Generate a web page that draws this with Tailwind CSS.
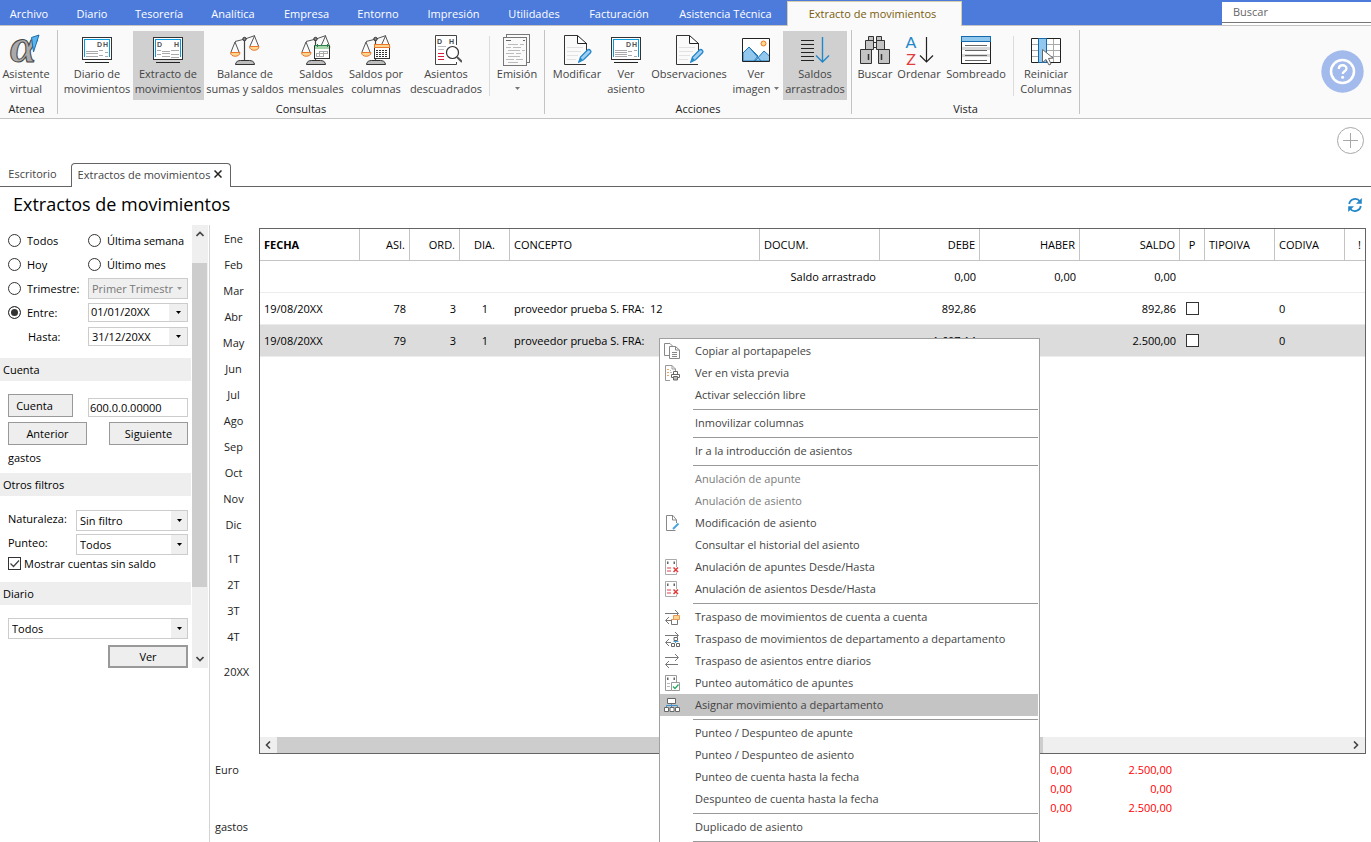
<!DOCTYPE html>
<html lang="es">
<head>
<meta charset="utf-8">
<title>Extractos de movimientos</title>
<script src="https://cdn.jsdelivr.net/npm/@tailwindcss/browser@4"></script>
</head>
<body class="h-screen overflow-hidden bg-white font-['Open_Sans',sans-serif] text-[11px] leading-[15px] text-black">

<svg class="hidden" aria-hidden="true">
  <symbol id="screen" viewBox="0 0 32 32">
    <g fill="none" shape-rendering="crispEdges">
      <rect x="1.5" y="3.5" width="29" height="22" fill="#fff" stroke="#333"/>
      <path d="M3.500 23V5.500h25V23" stroke="#0a9bdc"/>
      <path d="M4 28.500h24" stroke="#222"/>
    </g>
  </symbol>
  <symbol id="scale" viewBox="0 0 32 32">
    <g fill="none" stroke="#555">
      <path d="M6 7.500L16 5 26 1.500M6 8L2 18M6 8l4 10M25.500 2L21 12M25.500 2l4 10"/>
      <path d="M15.500 6v20" stroke="#444" stroke-width="1.200"/>
      <circle cx="15.500" cy="5" r="1.700" fill="#888" stroke="#333"/>
      <path d="M1.500 18.500h9.500c0 5-9.500 5-9.500 0zM20.500 12.500H30c0 5-9.500 5-9.500 0z" fill="#fcd68f" stroke="#e8762d"/>
      <path d="M6.500 30.500c0-3 3-4 5-4h9c2 0 5 1 5 4z" fill="#bdbdbd" stroke="#333"/>
    </g>
  </symbol>
  <symbol id="note" viewBox="0 0 32 32">
    <path d="M3.500 1.500h13M25 30.500H3.500v-29M25.500 9v9" fill="none" stroke="#333"/>
    <path d="M16.500 1.500v8h9z" fill="#fff" stroke="#222"/>
    <path d="M6 13.500h16M6 17.500h14M6 21.500h11M6 25.500h9" stroke="#e2e2e2"/>
    <path d="M18 28l1.500-5 7-7c2-1.500 4.500 1 3 2.800l-7 7z" fill="#9fd0f2" stroke="#2487c9" stroke-width="1.300"/>
    <path d="M17 28.500l2.500-5 2 2z" fill="#2487c9"/>
  </symbol>
  <symbol id="arrow" viewBox="0 0 5 3"><path d="M0 0h5L2.500 3z" fill="currentColor"/></symbol>
  <symbol id="sheetx" viewBox="0 0 16 16">
    <path d="M12.500 8V.5h-11v15h11v-2" fill="none" stroke="#aaa"/>
    <path d="M3 2.500h1.500V5H3zM9.500 2.500H11V5H9.500z" fill="#666"/>
    <path d="M3 9h4M3 12h4" stroke="#f0a0a0" stroke-width="1.800"/>
    <path d="M9.500 8.500l4.500 4.500M14 8.500L9.500 13" stroke="#e03a3a" stroke-width="1.500"/>
  </symbol>
  <symbol id="swap" viewBox="0 0 16 16"><path d="M1 4.500h13M11 1l3.500 3.500L11 8M14 11.500H2M5 8l-3.500 3.500L5 15" fill="none" stroke="#777"/></symbol>
</svg>

<div class="flex h-full flex-col">

  <!-- Menu bar -->
  <header class="flex h-[26px] shrink-0 items-stretch border-b border-[#c4c4c4] bg-[#4d7bdb] text-white">
    <nav class="flex [&>button]:pt-0.5">
      <button class="w-[62px] pr-1">Archivo</button>
      <button class="w-[60px]">Diario</button>
      <button class="w-[74px]">Tesorería</button>
      <button class="w-[74px]">Analítica</button>
      <button class="w-[73px]">Empresa</button>
      <button class="w-[70px]">Entorno</button>
      <button class="w-[81px]">Impresión</button>
      <button class="w-[80px]">Utilidades</button>
      <button class="w-[90px]">Facturación</button>
      <button class="w-[123px]">Asistencia Técnica</button>
      <button class="-mb-px mt-px w-[175px] border border-b-0 border-[#d6cfae] bg-[#fafafa] pb-1 pr-1 text-[#7a5c0a]">Extracto de movimientos</button>
    </nav>
    <div class="ml-auto mt-0.5 w-[149px] bg-white">
      <input type="text" aria-label="Buscar" placeholder="Buscar" class="block h-[21px] w-full border-b border-[#777] px-[11px] pb-0.5 outline-none placeholder:text-[#666]">
    </div>
  </header>

  <!-- Ribbon -->
  <section class="flex h-[93px] shrink-0 border-b border-[#c4c4c4] bg-[#fafafa] py-1 text-[#444]">
    <div class="flex w-[58px] flex-col border-r border-[#c4c4c4]">
      <div class="flex pt-px">
        <button class="flex h-[69px] w-[53px] flex-col items-center pr-px pt-[3px]">
          <svg class="size-8 shrink-0 overflow-visible" viewBox="0 0 32 32"><text x="0" y="28" font-family="Liberation Serif" font-style="italic" font-weight="bold" font-size="48" fill="#aaa" stroke="#444">α</text><path d="M21.500 3.500l7.500-2.500-5.500 17z" fill="#5ab4ee" stroke="#1b6fae"/></svg>
          <span>Asistente<br>virtual</span>
        </button>
      </div>
      <div class="mt-auto w-[53px] text-center leading-[11px] text-[#222]">Atenea</div>
    </div>

    <div class="flex w-[487px] flex-col border-r border-[#c4c4c4]">
      <div class="flex pl-1 pt-px">
        <button class="flex h-[69px] w-[71px] flex-col items-center pr-px pt-[3px]">
          <svg class="size-8 shrink-0" viewBox="0 0 32 32"><use href="#screen"/><g font-family="Liberation Sans" font-weight="bold" font-size="7" fill="#555"><text x="16" y="13">D</text><text x="22" y="13">H</text></g><path d="M5 17.500h12M18 16.500h4M24 18.500h3M5 19.500h12M18 21.500h4M5 22.500h12M24 22.500h3" stroke="#aaa"/></svg>
          <span>Diario de<br>movimientos</span>
        </button>
        <button class="flex h-[69px] w-[71px] flex-col items-center bg-[#d0d0d0] pr-px pt-[3px]">
          <svg class="size-8 shrink-0" viewBox="0 0 32 32"><use href="#screen"/><g font-family="Liberation Sans" font-weight="bold" font-size="7" fill="#555"><text x="5" y="13">D</text><text x="22" y="13">H</text></g><path d="M5 16.500h4M10 17.500h8M19 16.500h8M5 20.500h4M10 19.500h8M19 20.500h8M10 22.500h8M19 23.500h8" stroke="#aaa"/></svg>
          <span>Extracto de<br>movimientos</span>
        </button>
        <button class="flex h-[69px] w-[82px] flex-col items-center pt-[3px]">
          <svg class="size-8 shrink-0" viewBox="0 0 32 32"><use href="#scale"/></svg>
          <span class="whitespace-nowrap">Balance de<br>sumas y saldos</span>
        </button>
        <button class="flex h-[69px] w-[60px] flex-col items-center pt-[3px]">
          <svg class="size-8 shrink-0" viewBox="0 0 32 32"><use href="#scale"/><g shape-rendering="crispEdges"><path d="M14.500 11.500h15v13h-15z" fill="#fff" stroke="#333"/><path d="M15 12h14v3H15z" fill="#a5d6ab"/><path d="M14 11.500h16" stroke="#2e7d4b"/><path d="M17.500 10v3M27.500 10v3" stroke="#2e7d4b"/><path d="M20 17.500h8M16 19.500h12M16 22.500h8M19.500 17v6M23.500 17v6M16.500 19v4M27.500 17v3" stroke="#aaa"/></g></svg>
          <span>Saldos<br>mensuales</span>
        </button>
        <button class="flex h-[69px] w-[61px] flex-col items-center pr-px pt-[3px]">
          <svg class="size-8 shrink-0" viewBox="0 0 32 32"><use href="#scale"/><g shape-rendering="crispEdges"><path d="M14.500 10.500h15v14h-15z" fill="#fff" stroke="#333"/><path d="M14.500 10.500h15v3h-15z" fill="#fcd68f" stroke="#e8762d"/><path d="M16 16.500h2M19 16.500h9M16 18.500h2M19 18.500h9M16 20.500h2M19 20.500h9M16 22.500h2M19 22.500h9" stroke="#333" stroke-dasharray="2 1"/></g></svg>
          <span>Saldos por<br>columnas</span>
        </button>
        <button class="flex h-[69px] w-[78px] flex-col items-center pt-[3px]">
          <svg class="size-8 shrink-0" viewBox="0 0 32 32"><path d="M26.500 11V1.500h-21v29h21V28" fill="#fff" stroke="#444"/><g font-family="Liberation Sans" font-weight="bold" font-size="7" fill="#444"><text x="7" y="10">D</text><text x="19" y="10">H</text></g><path d="M8 12.500h8M8 15.500h6" stroke="#bbb"/><path d="M8 19.500h6M8 22.500h6M8 25.500h6" stroke="#d81e3c"/><circle cx="22.500" cy="18.500" r="6" fill="#fff" stroke="#333" stroke-width="1.200"/><path d="M27 23l5 5" stroke="#555" stroke-width="2"/></svg>
          <span>Asientos<br>descuadrados</span>
        </button>
        <div class="ml-1 mt-[5px] h-[60px] w-px bg-[#dcdcdc]"></div>
        <button class="flex h-[69px] w-[54px] flex-col items-center pt-[3px]">
          <svg class="size-8 shrink-0" viewBox="0 0 32 32" fill="#fafafa" stroke="#777" shape-rendering="crispEdges"><path d="M5.500.5h23v28h-23z"/><path d="M2.500 3.500h23v28h-23z"/><path d="M5 6.500h5M22 6.500h2" stroke="#666"/><path d="M7 10.500h10M19 10.500h4M5 13.500h5M12 13.500h8M7 16.500h12M21 16.500h3M5 19.500h8M15 19.500h5M7 22.500h12M5 25.500h8M15 25.500h7M7 28.500h10" stroke="#bbb"/></svg>
          <span>Emisión</span>
          <svg class="mt-1.5 h-[3px] w-[5px] text-[#777]"><use href="#arrow"/></svg>
        </button>
      </div>
      <div class="mt-auto text-center leading-[11px] text-[#222]">Consultas</div>
    </div>

    <div class="flex w-[307px] flex-col border-r border-[#c4c4c4]">
      <div class="flex pl-[3px] pt-px">
        <button class="flex h-[69px] w-[57px] flex-col items-center pl-px pt-[3px]">
          <svg class="size-8 shrink-0" viewBox="0 0 32 32"><use href="#note"/></svg>
          <span>Modificar</span>
        </button>
        <button class="flex h-[69px] w-[42px] flex-col items-center pt-[3px]">
          <svg class="size-8 shrink-0" viewBox="0 0 32 32"><use href="#screen"/><g font-family="Liberation Sans" font-weight="bold" font-size="7" fill="#555"><text x="16" y="13">D</text><text x="22" y="13">H</text></g><path d="M5 16.500h12M18 17.500h4M24 16.500h3M5 18.500h12M5 20.500h12M18 21.500h4M5 22.500h12M24 22.500h3" stroke="#aaa"/></svg>
          <span>Ver<br>asiento</span>
        </button>
        <button class="flex h-[69px] w-[83px] flex-col items-center pl-px pt-[3px]">
          <svg class="size-8 shrink-0" viewBox="0 0 32 32"><use href="#note"/></svg>
          <span>Observaciones</span>
        </button>
        <button class="flex h-[69px] w-[53px] flex-col items-center pr-px pt-[3px]">
          <svg class="size-8 shrink-0" viewBox="0 0 32 32"><path d="M2.500 4.500h27v23h-27z" fill="#fff"/><path d="M3 19l6-6 6 6 3 3-4 5H3zM15 27l9-10 5.500 5v5z" fill="#92c7ee" stroke="#1f77b8"/><path d="M3 19l6-6 12 14" fill="none" stroke="#1f77b8"/><circle cx="23.500" cy="9.500" r="2.500" fill="#fcd68f" stroke="#e8762d"/><path d="M2.500 4.500h27v23h-27z" fill="none" stroke="#222"/></svg>
          <span>Ver<br><span class="flex items-center gap-1">imagen <svg class="h-[3px] w-[5px] text-[#777]"><use href="#arrow"/></svg></span></span>
        </button>
        <button class="flex h-[69px] w-16 flex-col items-center bg-[#d0d0d0] pt-[3px]">
          <svg class="size-8 shrink-0" viewBox="0 0 32 32" fill="none"><path d="M2 6.500h13M2 10.500h13M2 14.500h13M2 18.500h13M2 22.500h13M2 26.500h13" stroke="#222"/><path d="M23.500 3v24.500M17 21.500l6.500 6.500 6.500-6.500" stroke="#2487c9" stroke-width="1.400"/></svg>
          <span>Saldos<br>arrastrados</span>
        </button>
      </div>
      <div class="mt-auto text-center leading-[11px] text-[#222]">Acciones</div>
    </div>

    <div class="flex w-[228px] flex-col border-r border-[#c4c4c4]">
      <div class="flex pl-[3px] pt-px">
        <button class="flex h-[69px] w-[41px] flex-col items-center pr-px pt-[3px]">
          <svg class="size-8 shrink-0" viewBox="0 0 32 32" fill="#c4c4c4" stroke="#333"><path d="M14 8.500h4v5h-4z" fill="#eee"/><path d="M9.500 2.500h5v4h-5zM17.500 2.500h5v4h-5zM6.500 6.500h8v9h-8zM17.500 6.500h8v9h-8zM1.500 15.500h11v14h-11zM19.500 15.500h11v14h-11z"/><path d="M9.500 20v6M22.500 20v6" stroke-width="1.500"/></svg>
          <span>Buscar</span>
        </button>
        <button class="flex h-[69px] w-[47px] flex-col items-center pr-px pt-[3px]">
          <svg class="size-8 shrink-0 overflow-visible" viewBox="0 0 32 32" fill="none"><text x="8" y="14" text-anchor="middle" font-family="Lato" font-size="16" fill="#2487c9">A</text><text x="8" y="30.500" text-anchor="middle" font-family="Lato" font-size="16" fill="#e23b3b">Z</text><path d="M23.500 3v24.500M17 21.500l6.500 6.500 6.500-6.500" stroke="#222" stroke-width="1.200"/></svg>
          <span>Ordenar</span>
        </button>
        <button class="flex h-[69px] w-[66px] flex-col items-center pt-[3px]">
          <svg class="size-8 shrink-0" viewBox="0 0 32 32" shape-rendering="crispEdges"><path d="M1.500 2.500h29v27h-29z" fill="#fff" stroke="#222"/><path d="M2 13h28v3H2zM2 20h28v3H2z" fill="#d8d8d8"/><path d="M1.500 2.500h29v5h-29z" fill="#92c7ee" stroke="#1569ad"/><path d="M5 11.500h22M5 16.500h22M5 21.500h22M5 26.500h22" stroke="#666"/></svg>
          <span>Sombreado</span>
        </button>
        <div class="ml-1 mt-[5px] h-[60px] w-px bg-[#dcdcdc]"></div>
        <button class="flex h-[69px] w-[65px] flex-col items-center pr-px pt-[3px]">
          <svg class="size-8 shrink-0" viewBox="0 0 32 32"><path d="M1.500 4.500h29v24h-29z" fill="#fff"/><path d="M2 10.500h28M2 16.500h28M2 22.500h28M23.500 5v23" stroke="#aaa"/><path d="M1.500 4.500h29v24h-29z" fill="none" stroke="#222"/><path d="M8.500 4.500h8v24h-8z" fill="#92c7ee" stroke="#1569ad"/><path d="M12.500 15.500v13l3.500-3 3 5.500 2-1-2.500-5.500 4.500-.5z" fill="#fff" stroke="#666"/></svg>
          <span>Reiniciar<br>Columnas</span>
        </button>
      </div>
      <div class="mt-auto text-center leading-[11px] text-[#222]">Vista</div>
    </div>

    <button aria-label="Ayuda" class="ml-auto mr-[7px] mt-5 size-[43px]">
      <svg class="size-full" viewBox="0 0 43 43" fill="none"><circle cx="21.500" cy="21.500" r="21.200" fill="#a3baec"/><circle cx="21.500" cy="21.500" r="11.500" stroke="#fff" stroke-width="2.500"/><path d="M17.800 19c0-5 7.700-4.800 7.700-.5 0 2.800-3.800 2.800-3.800 5.500" stroke="#fff" stroke-width="2.300"/><circle cx="21.600" cy="27.300" r="1.500" fill="#fff"/></svg>
    </button>
  </section>

  <!-- Document tabs -->
  <section class="flex h-[68px] shrink-0 flex-col justify-between">
    <div class="flex justify-end pr-[7px] pt-[7px]">
      <button aria-label="Añadir"><svg class="size-7" viewBox="0 0 28 28" fill="none" stroke="#a8a8a8"><circle cx="14.500" cy="14.500" r="13"/><path d="M14.500 7v15M7 14.500h15"/></svg></button>
    </div>
    <div class="flex h-6 text-[#444]">
      <button class="w-[71px] border-b border-[#646464] pb-0.5 pr-1.5">Escritorio</button>
      <div class="flex w-40 items-center justify-center gap-1 rounded-t border border-b-0 border-[#646464] pb-[3px] pr-0.5 whitespace-nowrap">
        <span>Extractos de movimientos</span>
        <button aria-label="Cerrar"><svg class="size-2" viewBox="0 0 8 8"><path d="M.5.5l7 7M7.500.5l-7 7" stroke="#222" stroke-width="1.500"/></svg></button>
      </div>
      <div class="flex-1 border-b border-[#646464]"></div>
    </div>
  </section>

  <div class="flex h-[38px] shrink-0 items-center justify-between pb-0.5 pl-[13px] pr-2">
    <h1 class="pb-0.5 text-[18px] leading-6">Extractos de movimientos</h1>
    <button aria-label="Actualizar"><svg class="size-4" viewBox="0 0 16 16" fill="none" stroke="#2487c9" stroke-width="1.800"><path d="M2.200 7A6 6 0 0 1 13 4.500M13.800 9A6 6 0 0 1 3 11.500"/><path d="M14.800 1v5.800H9zM1.200 15V9.200H7z" fill="#2487c9" stroke="none"/></svg></button>
  </div>

  <main class="relative flex min-h-0 flex-1">

    <!-- Filters -->
    <aside class="flex w-[210px] shrink-0 border-r border-[#d4d4d4]">
      <form class="w-[191px]">
        <div class="grid grid-cols-[80px_100px] pl-2 pt-[3px]">
          <label class="flex h-6 items-center gap-1.5"><input type="radio" name="periodo" class="size-[13px] appearance-none rounded-full border border-[#333] bg-white">Todos</label>
          <label class="flex h-6 items-center gap-1.5 whitespace-nowrap"><input type="radio" name="periodo" class="size-[13px] shrink-0 appearance-none rounded-full border border-[#333] bg-white">Última semana</label>
          <label class="flex h-6 items-center gap-1.5"><input type="radio" name="periodo" class="size-[13px] appearance-none rounded-full border border-[#333] bg-white">Hoy</label>
          <label class="flex h-6 items-center gap-1.5"><input type="radio" name="periodo" class="size-[13px] appearance-none rounded-full border border-[#333] bg-white">Último mes</label>
          <label class="flex h-6 items-center gap-1.5"><input type="radio" name="periodo" class="size-[13px] shrink-0 appearance-none rounded-full border border-[#333] bg-white">Trimestre:</label>
          <div class="relative flex h-6 items-center">
            <select disabled aria-label="Trimestre" class="h-[21px] w-full appearance-none border border-[#ccc] bg-[#efefef] px-[3px] text-[#777] opacity-100"><option>Primer Trimestr</option></select>
            <svg class="pointer-events-none absolute right-1.5 h-[3px] w-[5px] text-[#999]"><use href="#arrow"/></svg>
          </div>
          <label class="flex h-6 items-center gap-1.5"><input type="radio" name="periodo" checked class="size-[13px] appearance-none rounded-full border border-[#333] bg-white checked:bg-[#333] checked:shadow-[inset_0_0_0_2px_white]">Entre:</label>
          <div class="flex h-6 items-center"><div class="flex h-[19px] w-full border border-[#ccc]">
            <input aria-label="Entre" value="01/01/20XX" class="h-4 min-w-0 flex-1 px-0.5 outline-none"><button type="button" aria-label="Abrir calendario" class="flex w-[18px] items-center justify-center bg-[#efefef]"><svg class="h-[3px] w-[5px]"><use href="#arrow"/></svg></button>
          </div></div>
          <label for="hasta" class="flex h-6 items-center pl-5">Hasta:</label>
          <div class="flex h-6 items-center"><div class="flex h-[19px] w-full border border-[#ccc]">
            <input id="hasta" value="31/12/20XX" class="h-[17px] min-w-0 flex-1 px-[3px] outline-none"><button type="button" aria-label="Abrir calendario" class="flex w-[18px] items-center justify-center bg-[#efefef]"><svg class="h-[3px] w-[5px]"><use href="#arrow"/></svg></button>
          </div></div>
        </div>

        <h2 class="mt-2.5 flex h-[23px] items-center bg-[#eee] pl-[3px]">Cuenta</h2>
        <div class="flex flex-col pl-2 pr-[3px] pt-[13px]">
          <div class="flex items-end justify-between">
            <button type="button" class="h-[23px] w-[65px] border border-[#999] bg-[#eee] pr-3">Cuenta</button>
            <input aria-label="Cuenta" value="600.0.0.00000" class="h-[19px] w-[100px] border border-[#ccc] px-px pb-px outline-none">
          </div>
          <div class="mt-[5px] flex justify-between">
            <button type="button" class="h-[23px] w-[79px] border border-[#999] bg-[#eee]">Anterior</button>
            <button type="button" class="h-[23px] w-[79px] border border-[#999] bg-[#eee]">Siguiente</button>
          </div>
          <p class="mt-[5px]">gastos</p>
        </div>

        <h2 class="mt-2 flex h-[23px] items-center bg-[#eee] pl-[3px]">Otros filtros</h2>
        <div class="grid grid-cols-[68px_112px] gap-y-[3px] pl-2 pt-3.5">
          <label for="naturaleza" class="pt-px">Naturaleza:</label>
          <div class="relative flex items-center border border-[#ccc]">
            <select id="naturaleza" class="h-[19px] w-full appearance-none px-[3px] outline-none"><option>Sin filtro</option></select>
            <span class="pointer-events-none absolute right-0 flex h-full w-4 items-center justify-center bg-[#efefef]"><svg class="h-[3px] w-[5px]"><use href="#arrow"/></svg></span>
          </div>
          <label for="punteo" class="pt-px">Punteo:</label>
          <div class="relative flex items-center border border-[#ccc]">
            <select id="punteo" class="h-[19px] w-full appearance-none px-[3px] outline-none"><option>Todos</option></select>
            <span class="pointer-events-none absolute right-0 flex h-full w-4 items-center justify-center bg-[#efefef]"><svg class="h-[3px] w-[5px]"><use href="#arrow"/></svg></span>
          </div>
        </div>
        <label class="relative mt-px flex items-center gap-[3px] pl-2"><input type="checkbox" checked class="size-[13px] appearance-none border border-[#333] bg-white"><svg class="pointer-events-none absolute left-2 size-[13px]" viewBox="0 0 13 13"><path d="M2.500 6.500l3 3 5.500-6" fill="none" stroke="#444" stroke-width="1.300"/></svg>Mostrar cuentas sin saldo</label>

        <h2 class="mt-[11px] flex h-[23px] items-center bg-[#eee] pl-[3px]">Diario</h2>
        <div class="flex flex-col items-end gap-1.5 pl-2 pr-[3px] pt-[13px]">
          <div class="relative flex w-full items-center border border-[#ccc]">
            <select aria-label="Diario" class="h-[19px] w-full appearance-none px-[3px] outline-none"><option>Todos</option></select>
            <span class="pointer-events-none absolute right-0 flex h-full w-4 items-center justify-center bg-[#efefef]"><svg class="h-[3px] w-[5px]"><use href="#arrow"/></svg></span>
          </div>
          <button type="button" class="h-[23px] w-20 border-2 border-[#999] bg-[#eee]">Ver</button>
        </div>
      </form>
      <div class="ml-px flex h-[443px] w-4 flex-col items-center bg-[#efefef]">
        <svg class="mt-1.5 h-[6px] w-2" viewBox="0 0 8 6" fill="none" stroke="#444" stroke-width="1.600"><path d="M.5 5L4 1.500 7.500 5"/></svg>
        <div class="mt-[26px] h-[324px] w-[15px] self-start bg-[#cdcdcd]"></div>
        <svg class="mb-1.5 mt-auto h-[6px] w-2" viewBox="0 0 8 6" fill="none" stroke="#444" stroke-width="1.600"><path d="M.5 1L4 4.500 7.500 1"/></svg>
      </div>
    </aside>

    <!-- Period shortcuts -->
    <nav class="flex w-[49px] shrink-0 flex-col text-[#222] [&>button]:pr-0.5">
      <button class="h-[26px]">Ene</button>
      <button class="h-[26px]">Feb</button>
      <button class="h-[26px]">Mar</button>
      <button class="h-[26px]">Abr</button>
      <button class="h-[26px]">May</button>
      <button class="h-[26px]">Jun</button>
      <button class="h-[26px]">Jul</button>
      <button class="h-[26px]">Ago</button>
      <button class="h-[26px]">Sep</button>
      <button class="h-[26px]">Oct</button>
      <button class="h-[26px]">Nov</button>
      <button class="h-[26px]">Dic</button>
      <button class="mt-2 h-[26px]">1T</button>
      <button class="h-[26px]">2T</button>
      <button class="h-[26px]">3T</button>
      <button class="h-[26px]">4T</button>
      <button class="mt-[9px] h-[26px] pl-1.5">20XX</button>
      <span class="mt-[78px] pl-[5px]">Euro</span>
      <span class="mt-[42px] pl-[5px]">gastos</span>
    </nav>

    <!-- Entries grid -->
    <div class="mr-[5px] flex min-w-0 flex-1 flex-col pt-[3px]">
      <div class="flex h-[526px] flex-col border border-[#646464]">
        <table class="w-full table-fixed border-separate border-spacing-0">
          <colgroup><col class="w-[100px]"><col class="w-[50px]"><col class="w-[50px]"><col class="w-[50px]"><col class="w-[250px]"><col class="w-[120px]"><col class="w-[100px]"><col class="w-[100px]"><col class="w-[100px]"><col class="w-[25px]"><col class="w-[70px]"><col class="w-[70px]"><col></colgroup>
          <thead>
            <tr class="h-8 text-left [&>th]:border-b [&>th]:border-[#c4c4c4] [&>th]:px-1 [&>th]:font-normal">
              <th class="border-r"><b>FECHA</b></th>
              <th class="border-r text-right">ASI.</th>
              <th class="border-r text-right">ORD.</th>
              <th class="border-r text-center">DIA.</th>
              <th class="border-r">CONCEPTO</th>
              <th class="border-r">DOCUM.</th>
              <th class="border-r text-right">DEBE</th>
              <th class="border-r text-right">HABER</th>
              <th class="border-r text-right">SALDO</th>
              <th class="border-r text-center">P</th>
              <th class="border-r">TIPOIVA</th>
              <th class="border-r">CODIVA</th>
              <th class="text-right">!</th>
            </tr>
          </thead>
          <tbody class="[&_td]:border-b [&_td]:border-[#ececec] [&_td]:px-1">
            <tr class="h-8 text-right">
              <td></td><td></td><td></td><td></td><td></td><td>Saldo arrastrado</td><td>0,00</td><td>0,00</td><td>0,00</td><td></td><td></td><td></td><td></td>
            </tr>
            <tr class="h-8 text-right">
              <td class="text-left">19/08/20XX</td><td>78</td><td>3</td><td class="text-center">1</td><td class="whitespace-pre text-left">proveedor prueba S. FRA:  12</td><td></td><td>892,86</td><td></td><td>892,86</td>
              <td><input type="checkbox" aria-label="Punteado 78" class="mx-auto block size-[13px] appearance-none border border-[#333] bg-white"></td><td></td><td class="text-left">0</td><td></td>
            </tr>
            <tr class="h-8 bg-[#dcdcdc] text-right">
              <td class="text-left">19/08/20XX</td><td>79</td><td>3</td><td class="text-center">1</td><td class="text-left">proveedor prueba S. FRA:</td><td></td><td>1.607,14</td><td></td><td>2.500,00</td>
              <td><input type="checkbox" aria-label="Punteado 79" class="mx-auto block size-[13px] appearance-none border border-[#333] bg-white"></td><td></td><td class="text-left">0</td><td></td>
            </tr>
          </tbody>
        </table>
        <div class="mt-auto flex h-4 items-center bg-[#efefef] pr-1.5">
          <svg class="ml-[5px] h-2 w-[6px]" viewBox="0 0 6 8" fill="none" stroke="#444" stroke-width="1.600"><path d="M5 .5L1.500 4 5 7.500"/></svg>
          <div class="ml-1.5 h-full w-[766px] bg-[#cdcdcd]"></div>
          <svg class="ml-auto h-2 w-[6px]" viewBox="0 0 6 8" fill="none" stroke="#444" stroke-width="1.600"><path d="M1 .5L4.500 4 1 7.500"/></svg>
        </div>
      </div>
      <table class="mt-1.5 w-[913px] table-fixed text-right text-[#f00]">
        <colgroup><col><col class="w-[100px]"></colgroup>
        <tbody>
          <tr class="h-[19px]"><td>0,00</td><td>2.500,00</td></tr>
          <tr class="h-[19px]"><td>0,00</td><td>0,00</td></tr>
          <tr class="h-[19px]"><td>0,00</td><td>2.500,00</td></tr>
        </tbody>
      </table>
    </div>

    <!-- Context menu -->
    <div role="menu" class="absolute left-[659px] top-[113px] flex w-[381px] flex-col border border-[#a0a0a0] bg-white py-px pr-px text-[#444] [&>button]:flex [&>button]:h-[22px] [&>button]:items-center [&>button]:pb-0.5 [&>button]:pl-1 [&>hr]:my-0 [&>hr]:ml-[33px] [&>hr]:h-1.5 [&>hr]:border-0 [&_svg]:size-4 [&_i]:mr-[15px] [&_i]:mt-0.5 [&_i]:block [&_i]:size-4">
      <button role="menuitem"><i><svg viewBox="0 0 16 16" fill="#fff" stroke="#888"><path d="M5 12.500H.5v-12H6l3 3"/><path d="M5.500 3.500h6l4 3.500v8.500h-10z"/><path d="M11.500 3.500V7h4M8 9.500h5M8 11.500h5M8 13.500h5" fill="none"/></svg></i>Copiar al portapapeles</button>
      <button role="menuitem"><i><svg viewBox="0 0 16 16" fill="none" stroke="#999"><path d="M6 15.500H1.500V.5H8L11.500 4v3M8 .5V4h3.500"/><path d="M3 4.500h2M3 7.500h2M3 10.500h2" stroke="#e9a85c"/><path d="M6 7.500h2M6 5.500h1" stroke="#bbb"/><path d="M9.500 9V6.500h4V9M7.500 9.500h8v3h-8z" stroke="#666" fill="#fff"/><path d="M9.500 11.500h4v3.500h-4z" stroke="#666" fill="#bbb"/></svg></i>Ver en vista previa</button>
      <button role="menuitem"><i></i>Activar selección libre</button>
      <hr class="bg-[linear-gradient(#999,#999)] bg-[length:100%_1px] bg-[position:0_3px] bg-no-repeat">
      <button role="menuitem"><i></i>Inmovilizar columnas</button>
      <hr class="bg-[linear-gradient(#999,#999)] bg-[length:100%_1px] bg-[position:0_3px] bg-no-repeat">
      <button role="menuitem"><i></i>Ir a la introducción de asientos</button>
      <hr class="bg-[linear-gradient(#999,#999)] bg-[length:100%_1px] bg-[position:0_3px] bg-no-repeat">
      <button role="menuitem" disabled class="text-[#7c7c7c]"><i></i>Anulación de apunte</button>
      <button role="menuitem" disabled class="text-[#7c7c7c]"><i></i>Anulación de asiento</button>
      <button role="menuitem"><i><svg viewBox="0 0 16 16" fill="none" stroke="#888"><path d="M12.500 8V5L9 .5H2.500v15h9M8.500.5V5h4"/><path d="M9 14l5.500-5.500" stroke="#4aa3df" stroke-width="2"/></svg></i>Modificación de asiento</button>
      <button role="menuitem"><i></i>Consultar el historial del asiento</button>
      <button role="menuitem"><i><svg><use href="#sheetx"/></svg></i>Anulación de apuntes Desde/Hasta</button>
      <button role="menuitem"><i><svg><use href="#sheetx"/></svg></i>Anulación de asientos Desde/Hasta</button>
      <hr class="bg-[linear-gradient(#999,#999)] bg-[length:100%_1px] bg-[position:0_3px] bg-no-repeat">
      <button role="menuitem"><i><svg viewBox="0 0 16 16"><use href="#swap"/><path d="M9.500 6.500h6v4h-6z" fill="#fcd68f" stroke="#eb9a56"/><path d="M7.500 10.500h6v5h-6z" fill="#fff" stroke="#777"/><path d="M7 10.500h7" stroke="#eb9a56"/></svg></i>Traspaso de movimientos de cuenta a cuenta</button>
      <button role="menuitem"><i><svg viewBox="0 0 16 16"><use href="#swap"/><path d="M7 6h9v10H7z" fill="#fff"/><path d="M9.500 10.500h5M11.500 9v3" stroke="#4aa3df"/><path d="M10 6.500h3.500v3H10zM7.500 12.500h3v3h-3zM12.500 12.500h3v3h-3z" fill="#fff" stroke="#666"/></svg></i>Traspaso de movimientos de departamento a departamento</button>
      <button role="menuitem"><i><svg><use href="#swap"/></svg></i>Traspaso de asientos entre diarios</button>
      <button role="menuitem"><i><svg viewBox="0 0 16 16" fill="none" stroke="#999"><path d="M12.500 7V.5h-11v15h6"/><path d="M3 2.500h1.500V5H3zM9.500 2.500H11V5H9.500z" fill="#666" stroke="none"/><path d="M3 8.500h3M7 8.500h2M3 11.500h3" stroke="#bbb"/><path d="M7.500 7.500h8v8h-8z" fill="#fff"/><path d="M9 11.500l2 2 3.500-4" stroke="#2fa866" stroke-width="1.400"/></svg></i>Punteo automático de apuntes</button>
      <button role="menuitem" class="bg-[#c4c4c4]"><i><svg viewBox="0 0 16 16" fill="none"><path d="M7.500 6v4M2.500 10V8.500h11V10" stroke="#3f94cf"/><path d="M3.500 1.500h8v5h-8zM.5 10.500h4v4h-4zM6 10.500h4v4H6zM11.500 10.500h4v4h-4z" fill="#fff" stroke="#666"/></svg></i>Asignar movimiento a departamento</button>
      <hr class="bg-[linear-gradient(#999,#999)] bg-[length:100%_1px] bg-[position:0_3px] bg-no-repeat">
      <button role="menuitem"><i></i>Punteo / Despunteo de apunte</button>
      <button role="menuitem"><i></i>Punteo / Despunteo de asiento</button>
      <button role="menuitem"><i></i>Punteo de cuenta hasta la fecha</button>
      <button role="menuitem"><i></i>Despunteo de cuenta hasta la fecha</button>
      <hr class="bg-[linear-gradient(#999,#999)] bg-[length:100%_1px] bg-[position:0_3px] bg-no-repeat">
      <button role="menuitem"><i></i>Duplicado de asiento</button>
      <hr class="bg-[linear-gradient(#999,#999)] bg-[length:100%_1px] bg-[position:0_3px] bg-no-repeat">
    </div>
  </main>
</div>
</body>
</html>
